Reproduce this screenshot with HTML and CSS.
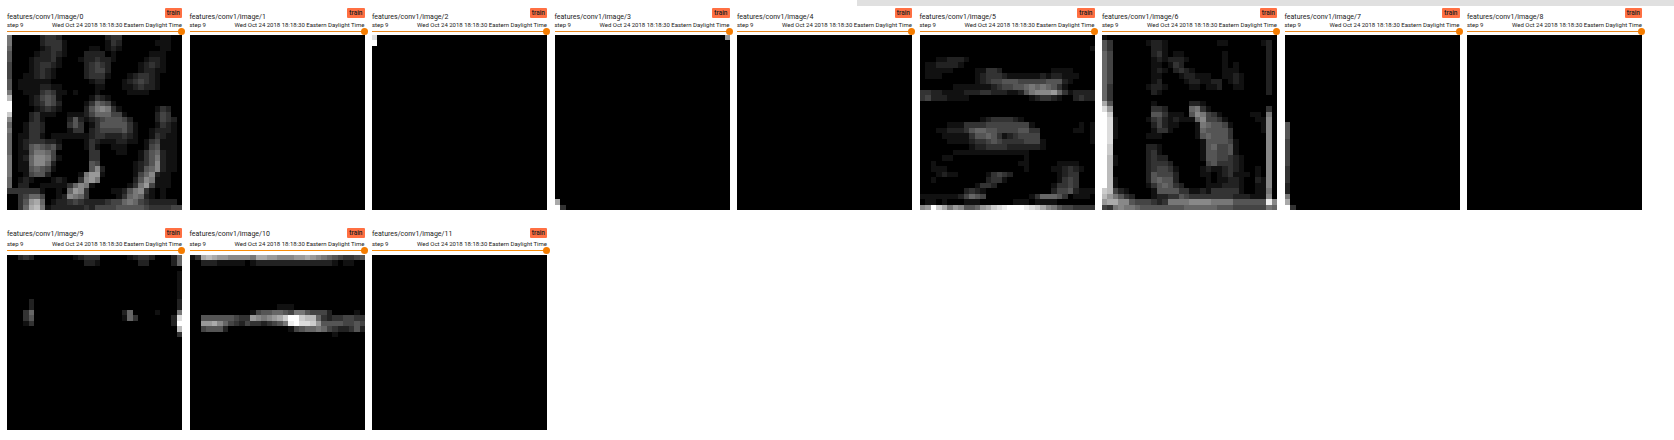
FILE: index.html
```html
<!DOCTYPE html>
<html lang="en">
<head>
    <meta charset="UTF-8">
    <title>features/conv1/image</title>
    <link rel="stylesheet" href="styles.css">
</head>
<body>
    <div class="top-shade"></div>
    <div class="cards">
        <div class="card">
            <div class="title-row"><span class="tag-name">features/conv1/image/0</span><span class="run-badge">train</span></div>
            <div class="info-row"><span class="step">step 9</span><span class="wall-time">Wed Oct 24 2018 18:18:30 Eastern Daylight Time</span></div>
            <div class="slider"><span class="slider-knob"></span></div>
            <canvas class="activation" width="32" height="32" data-image="0"></canvas>
        </div>
        <div class="card">
            <div class="title-row"><span class="tag-name">features/conv1/image/1</span><span class="run-badge">train</span></div>
            <div class="info-row"><span class="step">step 9</span><span class="wall-time">Wed Oct 24 2018 18:18:30 Eastern Daylight Time</span></div>
            <div class="slider"><span class="slider-knob"></span></div>
            <canvas class="activation" width="32" height="32"></canvas>
        </div>
        <div class="card">
            <div class="title-row"><span class="tag-name">features/conv1/image/2</span><span class="run-badge">train</span></div>
            <div class="info-row"><span class="step">step 9</span><span class="wall-time">Wed Oct 24 2018 18:18:30 Eastern Daylight Time</span></div>
            <div class="slider"><span class="slider-knob"></span></div>
            <canvas class="activation" width="32" height="32" data-image="2"></canvas>
        </div>
        <div class="card">
            <div class="title-row"><span class="tag-name">features/conv1/image/3</span><span class="run-badge">train</span></div>
            <div class="info-row"><span class="step">step 9</span><span class="wall-time">Wed Oct 24 2018 18:18:30 Eastern Daylight Time</span></div>
            <div class="slider"><span class="slider-knob"></span></div>
            <canvas class="activation" width="32" height="32" data-image="3"></canvas>
        </div>
        <div class="card">
            <div class="title-row"><span class="tag-name">features/conv1/image/4</span><span class="run-badge">train</span></div>
            <div class="info-row"><span class="step">step 9</span><span class="wall-time">Wed Oct 24 2018 18:18:30 Eastern Daylight Time</span></div>
            <div class="slider"><span class="slider-knob"></span></div>
            <canvas class="activation" width="32" height="32"></canvas>
        </div>
        <div class="card">
            <div class="title-row"><span class="tag-name">features/conv1/image/5</span><span class="run-badge">train</span></div>
            <div class="info-row"><span class="step">step 9</span><span class="wall-time">Wed Oct 24 2018 18:18:30 Eastern Daylight Time</span></div>
            <div class="slider"><span class="slider-knob"></span></div>
            <canvas class="activation" width="32" height="32" data-image="5"></canvas>
        </div>
        <div class="card">
            <div class="title-row"><span class="tag-name">features/conv1/image/6</span><span class="run-badge">train</span></div>
            <div class="info-row"><span class="step">step 9</span><span class="wall-time">Wed Oct 24 2018 18:18:30 Eastern Daylight Time</span></div>
            <div class="slider"><span class="slider-knob"></span></div>
            <canvas class="activation" width="32" height="32" data-image="6"></canvas>
        </div>
        <div class="card">
            <div class="title-row"><span class="tag-name">features/conv1/image/7</span><span class="run-badge">train</span></div>
            <div class="info-row"><span class="step">step 9</span><span class="wall-time">Wed Oct 24 2018 18:18:30 Eastern Daylight Time</span></div>
            <div class="slider"><span class="slider-knob"></span></div>
            <canvas class="activation" width="32" height="32" data-image="7"></canvas>
        </div>
        <div class="card">
            <div class="title-row"><span class="tag-name">features/conv1/image/8</span><span class="run-badge">train</span></div>
            <div class="info-row"><span class="step">step 9</span><span class="wall-time">Wed Oct 24 2018 18:18:30 Eastern Daylight Time</span></div>
            <div class="slider"><span class="slider-knob"></span></div>
            <canvas class="activation" width="32" height="32"></canvas>
        </div>
        <div class="card card-lower">
            <div class="title-row"><span class="tag-name">features/conv1/image/9</span><span class="run-badge">train</span></div>
            <div class="info-row"><span class="step">step 9</span><span class="wall-time">Wed Oct 24 2018 18:18:30 Eastern Daylight Time</span></div>
            <div class="slider"><span class="slider-knob"></span></div>
            <canvas class="activation" width="32" height="32" data-image="9"></canvas>
        </div>
        <div class="card card-lower">
            <div class="title-row"><span class="tag-name">features/conv1/image/10</span><span class="run-badge">train</span></div>
            <div class="info-row"><span class="step">step 9</span><span class="wall-time">Wed Oct 24 2018 18:18:30 Eastern Daylight Time</span></div>
            <div class="slider"><span class="slider-knob"></span></div>
            <canvas class="activation" width="32" height="32" data-image="10"></canvas>
        </div>
        <div class="card card-lower">
            <div class="title-row"><span class="tag-name">features/conv1/image/11</span><span class="run-badge">train</span></div>
            <div class="info-row"><span class="step">step 9</span><span class="wall-time">Wed Oct 24 2018 18:18:30 Eastern Daylight Time</span></div>
            <div class="slider"><span class="slider-knob"></span></div>
            <canvas class="activation" width="32" height="32"></canvas>
        </div>
    </div>
    <script src="images.js"></script>
</body>
</html>
```
FILE: styles.css
```css
body {
    font-family: 'Roboto', sans-serif;
    background: #FFFFFF;
    color: #212121;
    margin: 0;
    padding: 0;
}

.top-shade {
    position: absolute;
    top: 0;
    right: 0;
    width: 817px;
    height: 6px;
    background: #e0e0e0;
}

.cards {
    display: flex;
    flex-wrap: wrap;
    column-gap: 7.5px;
    padding-left: 7px;
}

.card {
    width: 175px;
    height: 220px;
    box-sizing: border-box;
    padding-top: 8px;
}

.title-row {
    display: flex;
    justify-content: space-between;
    align-items: flex-start;
    height: 12px;
}

.tag-name {
    font-size: 7px;
    line-height: 18px;
    white-space: nowrap;
}

.run-badge {
    background: #ff7043;
    border-radius: 1px;
    color: #212121;
    font-size: 6.5px;
    font-weight: 500;
    line-height: 10px;
    padding: 0 2px;
}

.info-row {
    display: flex;
    justify-content: space-between;
    font-size: 6px;
    line-height: 8px;
    height: 11px;
    padding-top: 1px;
    box-sizing: border-box;
    white-space: nowrap;
}

.slider {
    height: 1px;
    background: #e8871e;
    position: relative;
    margin-bottom: 3px;
}

.slider-knob {
    position: absolute;
    right: -3px;
    top: -3px;
    width: 7px;
    height: 7px;
    border-radius: 50%;
    background: #f57c00;
}

.activation {
    display: block;
    width: 175px;
    height: 175px;
    background: #000000;
    image-rendering: pixelated;
}

/* second row sits a little tighter above its picture */
.card-lower .title-row {
    height: 11px;
}

.card-lower .tag-name {
    line-height: 13px;
}

.card-lower .slider {
    background: #f78c0a;
    margin-bottom: 4px;
}
```
FILE: images.js
```js
// brightness per cell, one hex digit (0-f), 32 x 32
var images = {
    0: `
        7000 0023 3200 0000 0023 3000 0000 1100
        7000 0023 3310 0000 0013 2000 0001 1100
        6000 0012 3310 0001 1012 1000 0000 1100
        5000 0122 3210 0022 2201 0000 0011 1000
        5000 1222 3100 0122 3221 0000 0122 1000
        4000 1233 2100 0023 4320 0000 1232 1000
        4000 1232 1000 0023 4420 0000 1221 1000
        4001 1232 1000 0023 3310 0012 3321 0000
        5011 1111 0000 0001 2200 0123 4321 0000
        5011 1122 1100 0000 1100 0112 3221 0000
        7001 1134 3110 1000 1000 0011 1100 0000
        b000 1245 4100 0001 3210 0000 0000 0000
        f000 1235 4200 0013 6541 0000 0000 0000
        f000 0123 2100 0025 7873 1000 0001 3200
        c000 2311 1001 1124 6664 4100 0002 4300
        8000 2310 0002 5212 3455 5420 0002 4320
        6001 3320 0003 5301 3555 5531 0001 3210
        7001 3320 0001 3302 3444 4531 0012 2210
        6011 3310 1111 1112 3322 2321 0013 2110
        6012 3332 2100 0013 2111 2211 0134 1110
        6012 5654 5200 0013 1001 1100 0145 1110
        6011 5776 4000 0003 3000 1100 1356 2110
        7012 6887 4100 0003 3000 0000 1357 2110
        7011 6886 2000 0005 4000 0001 2358 2110
        7011 5654 1000 0005 8200 0001 2568 2110
        7001 4552 0000 0179 9100 0001 4682 1100
        6012 1000 1210 0389 7000 0002 5871 1100
        6022 0011 1113 6871 0000 0013 7941 1100
        3333 3310 0106 9830 0001 1257 8310 1000
        0034 6640 0128 7630 0000 1367 6210 1000
        0035 9a60 1223 4322 2234 4676 4322 2220
        0036 ab71 2222 2232 4444 5555 5433 3344`,
    2: `
        d
        f`,
    3: `
        0000 0000 0000 0000 0000 0000 0000 0009
        ${'0\n'.repeat(29)}
        a
        f3`,
    5: `
        0000 0000 0000 0000 0000 0000 0000 0000
        0000 0000 0000 0000 0000 0000 0000 0000
        0000 0000 0000 0000 0000 0000 0000 0001
        0000 0000 0000 0000 0000 0000 0000 0000
        0001 1222 1000 0000 0000 0000 0000 0000
        0112 2221 0000 0000 0000 0000 0000 0000
        0111 1100 0011 3320 0000 0000 1111 0000
        0111 0000 0012 3332 1111 1121 2211 1000
        0000 0000 0012 3445 5544 4445 5521 0000
        0000 0011 1111 1234 4556 7676 5310 0000
        3322 1111 2223 3222 1125 7888 9631 2222
        3422 2111 1000 0000 0000 1233 2100 2322
        0000 0000 0000 0000 0000 0000 0000 0000
        0000 0000 0000 0000 0000 0000 0000 0000
        0000 0000 0000 0000 0000 0000 0000 0000
        0000 0000 0001 2333 3210 0000 0000 0000
        0000 0111 3333 4444 4444 1000 0000 0101
        0001 1222 3566 5544 4455 3300 0000 1101
        0000 1111 1355 6531 2344 4400 0000 0001
        0000 0111 1233 4543 3334 4410 0000 0001
        0000 0000 0122 3333 2222 2210 0000 0000
        0000 0011 1111 1111 1111 0000 0000 0000
        0000 1100 0000 0000 0001 0000 0000 0000
        0010 0000 0000 0000 0011 0000 0111 1000
        0011 1000 0000 0000 0001 0000 1123 2100
        0001 2110 0000 1343 2000 0000 0123 3000
        0010 0000 0000 2331 0000 0000 0134 3000
        0000 0000 0013 3200 0000 0000 1334 3000
        0000 0000 2321 0000 0000 0000 2445 2111
        1111 1112 4654 0000 0000 1366 6530 1110
        0110 1000 1110 0000 0111 0111 1000 0000
        89fc a798 5569 acde fffe dca8 7544 3333`,
    6: `
        1000 0000 0000 0000 0000 0000 0000 0000
        5300 0000 1221 0000 0000 0110 0000 0120
        5300 0000 0221 0000 0000 0000 0000 0020
        6400 0000 0231 0110 0000 0010 0000 0020
        6400 0000 0121 2221 0000 0010 0000 0020
        6400 0000 0110 1320 0000 0010 1000 0020
        6400 0000 0121 0232 1000 0011 1000 0020
        6400 0000 0110 0012 2111 0011 2100 0020
        6400 0000 0120 0001 2211 2201 2100 0020
        6300 0000 1221 0000 1101 1200 1100 0020
        6300 0000 0210 0000 0000 0000 0000 0020
        6300 0000 0000 0000 0000 0000 0000 0000
        a500 0000 0100 0000 2210 0000 0000 0000
        d900 0000 0332 0000 6731 0000 0000 0030
        fc00 0000 0553 1110 5874 3100 0001 1070
        fd10 0000 1342 1211 1684 4310 0000 1180
        fd10 0000 0242 1100 0176 5541 0000 0180
        fd10 0000 0133 1000 0165 5553 0000 0180
        fd10 0000 1110 0000 0156 5553 0000 0080
        fd00 0000 0000 0000 0015 5554 1000 0080
        fc00 0000 2210 0000 0015 6445 1000 0080
        fc00 0000 2310 0000 0015 5445 1000 0080
        fb10 0000 2322 0000 0015 5443 2100 0080
        fb10 0000 2333 2000 0004 5333 2100 0080
        fb00 0000 2344 3100 0012 1123 2100 1080
        fb00 0000 2544 4200 0011 0123 1110 1080
        fb10 0000 2565 5200 0001 0112 2100 2180
        fb10 0000 1356 5320 0001 1122 2100 1180
        cb42 1000 0155 5533 1121 3333 3100 1170
        b975 3200 0122 3354 3333 3333 2221 1180
        9aa8 8544 4323 7777 8888 7777 5555 55e8
        4378 7765 5555 5556 6666 6555 4444 4476`,
    7: `
        ${'0\n'.repeat(16)}
        5
        5
        5
        4
        4
        4
        4
        4
        3
        3
        3
        2
        2
        7
        a
        f3`,
    9: `
        0023 2000 0000 1233 3000 0012 3320 0026
        0000 0000 0000 0022 1000 0000 2200 0026
        0000 0000 0000 0000 0000 0000 0000 0000
        0000 0000 0000 0000 0000 0000 0000 0001
        0000 0000 0000 0000 0000 0000 0000 0001
        0000 0000 0000 0000 0000 0000 0000 0001
        0000 0000 0000 0000 0000 0000 0000 0001
        0000 0000 0000 0000 0000 0000 0000 0001
        0000 2000 0000 0000 0000 0000 0000 0002
        0000 2000 0000 0000 0000 0000 0000 0002
        0003 6000 0000 0000 0000 0260 0001 0007
        0003 5000 0000 0000 0000 0163 0000 002d
        0001 3000 0000 0000 0000 0000 0000 002f
        0000 0000 0000 0000 0000 0000 0000 000b
        0000 0000 0000 0000 0000 0000 0000 0003`,
    10: `
        13ab a998 8887 aa99 8889 9a98 7654 3345
        0022 2111 1101 2222 2222 2222 2210 1100
        0000 0000 0000 0000 0000 0000 0000 0000
        0000 0000 0000 0000 0000 0000 0000 0000
        0000 0000 0000 0000 0000 0000 0000 0000
        0000 0000 0000 0000 0000 0000 0000 0000
        0000 0000 0000 0000 0000 0000 0000 0000
        0000 0000 0000 0000 0000 0000 0000 0000
        0000 0000 0000 0000 0000 0000 0000 0000
        0000 0000 0000 0000 1110 0000 0000 0000
        0000 0000 0001 4556 6547 7544 4200 0010
        0055 5555 4339 8789 acff cbb6 3233 4433
        0099 a864 3243 3234 57ef ddc9 5555 4454
        0045 5520 0000 0000 0014 5667 6432 2352
        0000 0000 0000 0000 0000 0000 0010 0000`
};

function drawImage(canvas, data) {
    var ctx = canvas.getContext('2d');
    var rows = data.split('\n')
        .map(function(r) { return r.replace(/\s/g, ''); })
        .filter(function(r) { return r.length > 0; });
    rows.forEach(function(row, y) {
        for (var x = 0; x < row.length; x++) {
            var v = parseInt(row[x], 16) * 17;
            ctx.fillStyle = 'rgb(' + v + ',' + v + ',' + v + ')';
            ctx.fillRect(x, y, 1, 1);
        }
    });
}

document.querySelectorAll('canvas[data-image]').forEach(function(canvas) {
    drawImage(canvas, images[canvas.dataset.image]);
});
```
